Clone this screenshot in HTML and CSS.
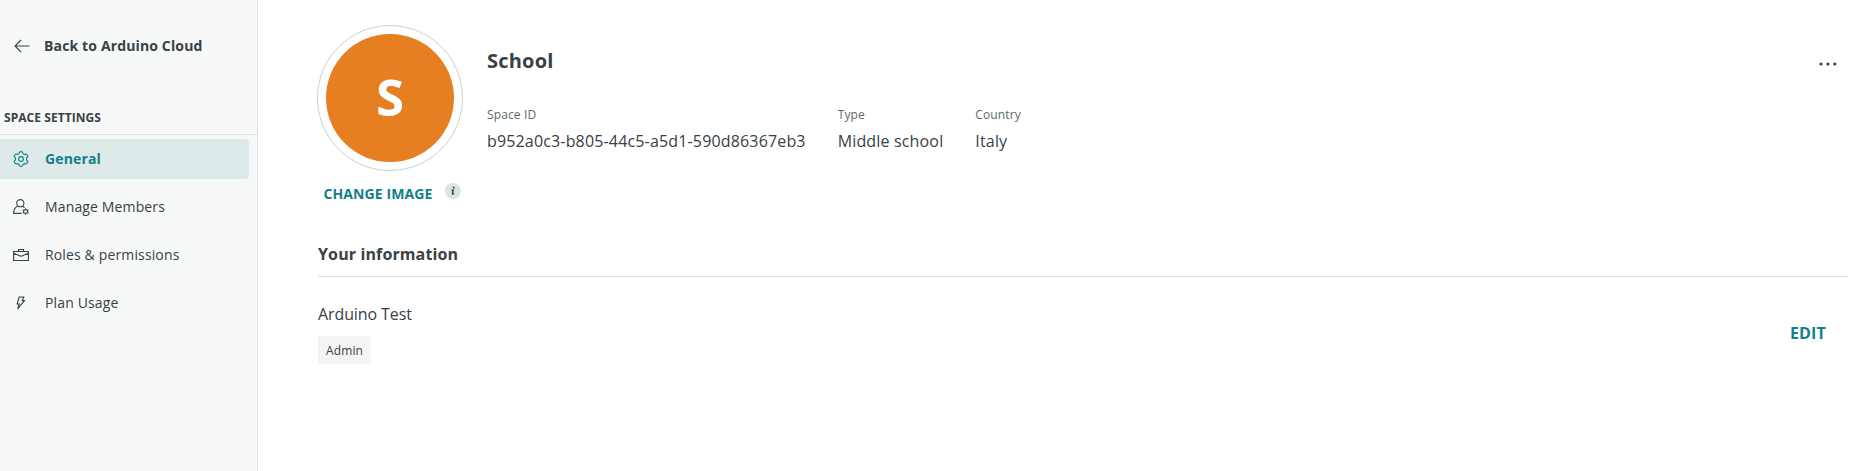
FILE: index.html
```html
<!DOCTYPE html>
<html lang="en">
<head>
<meta charset="utf-8">
<title>Space settings</title>
<link rel="stylesheet" href="styles.css">
</head>
<body>
<div class="app">
  <aside class="sidebar">
    <a class="back">
      <svg class="icon" width="16" height="16" viewBox="0 0 16 16"><path d="M15.5 8H1M7 2L1 8l6 6"/></svg>
      <span class="label">Back to Arduino Cloud</span>
    </a>
    <h2 class="group-title">SPACE SETTINGS</h2>
    <nav class="nav">
      <a class="nav-item active">
        <svg class="icon" width="16" height="16" viewBox="0 0 16 16"><path d="M6.5 1.1Q8 .2 9.5 1.1L10.1 2.7 11.2 3.3 12.9 3Q14.5 3.9 14.9 5.6L13.6 7V9L14.9 10.4Q14.5 12.1 12.9 13L11.2 12.7 10.1 13.3 9.5 14.9Q8 15.8 6.5 14.9L5.9 13.3 4.8 12.7 3.1 13Q1.5 12.1 1.1 10.4L2.4 9V7L1.1 5.6Q1.5 3.9 3.1 3L4.8 3.3 5.9 2.7Z"/><circle cx="8" cy="8" r="2.4"/></svg>
        <span class="label">General</span>
      </a>
      <a class="nav-item">
        <svg class="icon" width="16" height="16" viewBox="0 0 16 16"><circle cx="7.3" cy="4.2" r="3.6"/><path d="M4.8 7.2C2.2 8 .8 10.2.6 14.4H8.6M9.8 7.2 11.6 8.6"/><path d="M12.6 9.9l.8 1.1 1.5.1-.5 1.4.5 1.3-1.5.2-.8 1.2-.8-1.2-1.5-.2.5-1.3-.5-1.4 1.5-.1Z"/></svg>
        <span class="label">Manage Members</span>
      </a>
      <a class="nav-item">
        <svg class="icon" width="16" height="16" viewBox="0 0 16 16"><path d="M.6 4.5H15.4V13.5H.6ZM5.5 4.5V2.5H10.5V4.5M.6 6.2 6 8.5Q8 9.8 10 8.5L15.4 6.2"/></svg>
        <span class="label">Roles &amp; permissions</span>
      </a>
      <a class="nav-item">
        <svg class="icon" width="16" height="16" viewBox="0 0 16 16"><path d="M6.2 2H10.8L9.3 5.6H11.5L4.6 13.9 6.2 9H4.1Z"/></svg>
        <span class="label">Plan Usage</span>
      </a>
    </nav>
  </aside>
  <main class="main">
    <section class="space">
      <div class="picture">
        <div class="ring"><div class="avatar">S</div></div>
        <div class="change">
          <a class="link change-link">CHANGE IMAGE</a>
          <svg class="info" width="16" height="16" viewBox="0 0 16 16"><circle class="info-bg" cx="8" cy="8" r="8"/><path class="info-fg" d="M7.8 3.8h1.8v1.7H7.8ZM6.4 6.6H9L8.3 10.5 9.5 10.3 9.3 11.2Q6.6 12.6 6.7 10.8L7.3 7.5H6.2Z"/></svg>
        </div>
      </div>
      <div class="details">
        <h1 class="name">School</h1>
        <dl class="facts">
          <div class="fact"><dt>Space ID</dt><dd>b952a0c3-b805-44c5-a5d1-590d86367eb3</dd></div>
          <div class="fact"><dt>Type</dt><dd>Middle school</dd></div>
          <div class="fact"><dt>Country</dt><dd>Italy</dd></div>
        </dl>
      </div>
      <svg class="more" width="18" height="4" viewBox="0 0 18 4"><circle cx="2" cy="2" r="1.6"/><circle cx="8.9" cy="2" r="1.6"/><circle cx="15.8" cy="2" r="1.6"/></svg>
    </section>
    <h2 class="section-title">Your information</h2>
    <section class="person">
      <div>
        <div class="person-name">Arduino Test</div>
        <span class="role">Admin</span>
      </div>
      <a class="link edit">EDIT</a>
    </section>
  </main>
</div>
</body>
</html>
```

FILE: styles.css
```css
* { box-sizing: border-box; }
body { margin: 0; background: #fff; color: #374146; font-family: "Open Sans", sans-serif; }
h1, h2, dl, dd { margin: 0; }
.app { display: flex; height: 471px; }
.sidebar { width: 258px; flex: none; background: #f7f9f9; border-right: 1px solid #dae3e3; }
.icon { flex: none; fill: none; stroke: currentColor; stroke-width: 1.1; }
.label { padding-bottom: 2px; }
.back { display: flex; align-items: center; gap: 14px; height: 24px; margin-top: 34px; padding-left: 14px; font-size: 14px; font-weight: 700; letter-spacing: .14px; }
.group-title { height: 31px; margin-top: 46px; padding-left: 4px; border-bottom: 1px solid #dae3e3; font-size: 12px; line-height: 27px; letter-spacing: .06px; }
.nav { display: grid; gap: 8px; padding: 4px 8px 0 0; }
.nav-item { display: flex; align-items: center; gap: 16px; height: 40px; padding-left: 13px; border-radius: 0 4px 4px 0; font-size: 14px; letter-spacing: .14px; }
.nav-item.active { background: #dee9e9; color: #12808a; font-weight: 700; }
.main { flex: 1; padding: 25px 24px 0 59px; }
.space { display: flex; height: 205px; }
.picture { width: 146px; }
.ring { width: 146px; height: 146px; padding: 8px; border: 1px solid #c9d2d2; border-radius: 50%; }
.avatar { display: grid; place-items: center; height: 128px; padding-bottom: 4px; border-radius: 50%; background: #e67e22; color: #fff; font-size: 51px; font-weight: 700; line-height: 1; }
.link { color: #12808a; font-weight: 700; }
.change { display: flex; justify-content: space-between; padding: 12px 2px 0 6.5px; }
.change-link { font-size: 14px; line-height: 22px; white-space: nowrap; letter-spacing: .1px; }
.info-bg { fill: #dae3e3; }
.info-fg { fill: #374146; }
.details { flex: 1; padding: 22px 0 0 24px; }
.name { font-size: 20px; line-height: 28px; letter-spacing: .2px; }
.facts { display: flex; gap: 32px; margin-top: 31px; }
dt { color: #5d6a6b; font-size: 12px; line-height: 18px; letter-spacing: .12px; }
dd { margin-top: 5px; font-size: 16px; line-height: 24px; letter-spacing: .16px; }
.more { margin: 37px 11px 0 0; fill: currentColor; }
.section-title { height: 47px; margin-left: 1px; border-bottom: 1px solid #dae3e3; font-size: 16px; line-height: 48px; letter-spacing: .12px; }
.person { display: flex; justify-content: space-between; padding: 25px 22px 0 1px; }
.person-name { font-size: 16px; line-height: 24px; letter-spacing: -.1px; }
.role { display: block; width: 53px; height: 28px; margin-top: 10px; background: #f4f4f4; font-size: 12px; line-height: 29px; text-align: center; letter-spacing: .12px; }
.edit { padding-top: 19px; font-size: 16px; line-height: 24px; letter-spacing: .16px; }
```
